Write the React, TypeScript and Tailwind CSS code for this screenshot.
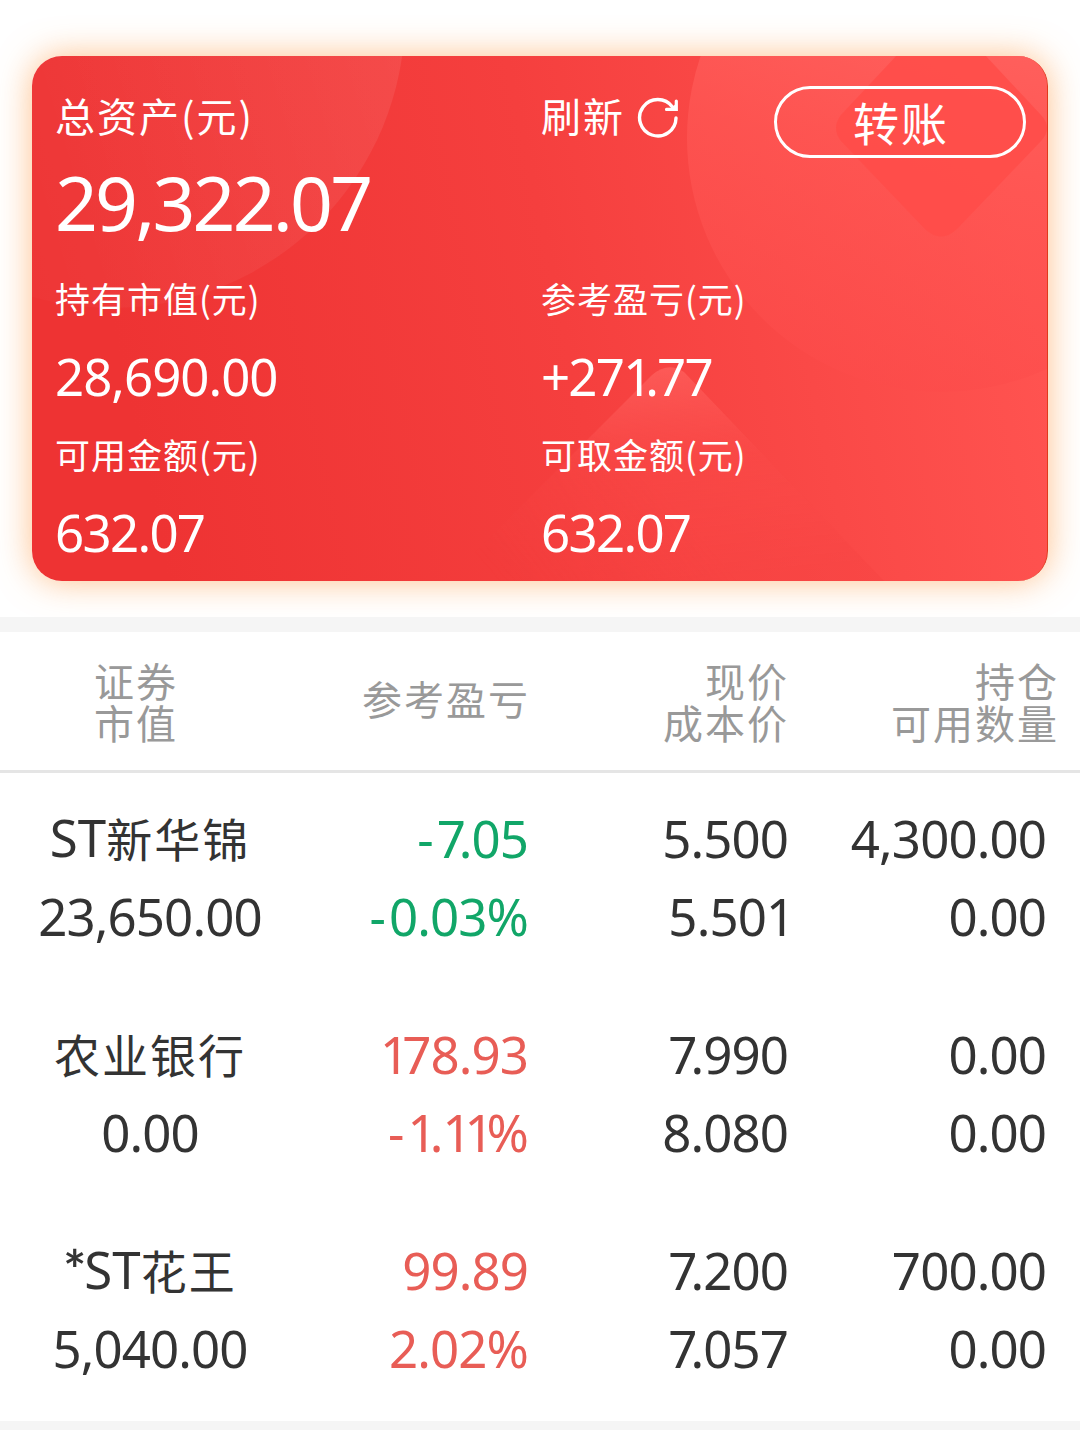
type Holding = {
  name: string;
  value: string;
  profit: string;
  rate: string;
  price: string;
  cost: string;
  amount: string;
  usable: string;
  color: string;
};

const holdings: Holding[] = [
  {
    name: "ST新华锦",
    value: "23,650.00",
    profit: "-7.05",
    rate: "-0.03%",
    price: "5.500",
    cost: "5.501",
    amount: "4,300.00",
    usable: "0.00",
    color: "text-[#11a668]",
  },
  {
    name: "农业银行",
    value: "0.00",
    profit: "178.93",
    rate: "-1.11%",
    price: "7.990",
    cost: "8.080",
    amount: "0.00",
    usable: "0.00",
    color: "text-[#e85d56]",
  },
  {
    name: "*ST花王",
    value: "5,040.00",
    profit: "99.89",
    rate: "2.02%",
    price: "7.200",
    cost: "7.057",
    amount: "700.00",
    usable: "0.00",
    color: "text-[#e85d56]",
  },
];

const stats = [
  { label: "持有市值(元)", value: "28,690.00", tracking: "tracking-[-1px]" },
  { label: "参考盈亏(元)", value: "+271.77", tracking: "tracking-[-1.8px]" },
  { label: "可用金额(元)", value: "632.07", tracking: "tracking-[-1.7px]" },
  { label: "可取金额(元)", value: "632.07", tracking: "tracking-[-1.7px]" },
];

// "1" is narrower than the tabular digit width, "7." is kerned, "-" is wider
function Num({ text }: { text: string }) {
  return (
    <>
      {text.split(/(1|7(?=\.)|-)/).map((part, i) => {
        if (part === "1") {
          return (
            <span key={i} className="tracking-[-0.14em]">
              1
            </span>
          );
        }
        if (part === "7" && i % 2 === 1) {
          return (
            <span key={i} className="tracking-[-0.14em]">
              7
            </span>
          );
        }
        if (part === "-") {
          return (
            <span key={i} className="tracking-[0.06em]">
              -
            </span>
          );
        }
        return part;
      })}
    </>
  );
}

function StockName({ name }: { name: string }) {
  return (
    <>
      {name.split(/(\*|ST)/).map((part, i) => {
        if (part === "*") {
          return (
            <span key={i} className="font-[Lato] text-[54px] leading-none font-bold tracking-[-2px]">
              *
            </span>
          );
        }
        if (part === "ST") {
          return (
            <span key={i} className="font-['Noto_Sans'] text-[51px] leading-none tracking-[0px]">
              ST
            </span>
          );
        }
        return part;
      })}
    </>
  );
}

function RefreshIcon() {
  return (
    <svg width="44" height="44" viewBox="0 0 44 44" fill="none" stroke="#fff" strokeWidth="3.4">
      <path d="M40 23A18.2 18.2 0 1 1 36.5 12" strokeLinecap="round" />
      <path d="M40.3 6V14.4H30.5" strokeWidth="3.2" strokeLinecap="round" />
      <path d="M34 14.5L40.5 8V14.5Z" fill="#fff" stroke="none" />
    </svg>
  );
}

function CardArt() {
  return (
    <svg className="absolute inset-0" width="1016" height="525" viewBox="32 56 1016 525">
      <defs>
        <linearGradient id="left" x1="0" y1="0.75" x2="1" y2="0.45">
          <stop offset="0.2" stopColor="#fff" stopOpacity="0.01" />
          <stop offset="1" stopColor="#fff" stopOpacity="0.08" />
        </linearGradient>
        <linearGradient id="right" x1="0.6" y1="0.1" x2="0.4" y2="1">
          <stop offset="0" stopColor="#ff6b68" stopOpacity="0.85" />
          <stop offset="0.5" stopColor="#ff5855" stopOpacity="0.7" />
          <stop offset="1" stopColor="#fc4b4a" stopOpacity="0.6" />
        </linearGradient>
        <linearGradient id="peak" gradientUnits="userSpaceOnUse" x1="660" y1="365" x2="680" y2="581">
          <stop offset="0" stopColor="#ff6562" stopOpacity="0.7" />
          <stop offset="0.45" stopColor="#fb4c4a" stopOpacity="0.4" />
          <stop offset="1" stopColor="#f74443" stopOpacity="0.5" />
        </linearGradient>
        {/* fades the peak out towards its lower left corner */}
        <linearGradient id="fade" gradientUnits="userSpaceOnUse" x1="480" y1="560" x2="620" y2="440">
          <stop offset="0" stopColor="#000" />
          <stop offset="1" stopColor="#fff" />
        </linearGradient>
        <mask id="peak-mask">
          <rect x="440" y="350" width="460" height="240" fill="url(#fade)" />
        </mask>
      </defs>
      <circle cx="112" cy="15" r="293" fill="url(#left)" />
      <circle cx="941" cy="138" r="254" fill="url(#right)" />
      <path
        d="M841 115L941 8L1041 115Q1053 128 1041 141L957 229Q941 244 925 229L841 141Q831 128 841 115Z"
        fill="#ff4c49"
        fillOpacity="0.85"
      />
      <path d="M446 581L652 375Q668 361 684 372L884 581Z" fill="url(#peak)" mask="url(#peak-mask)" />
    </svg>
  );
}

function AssetCard() {
  return (
    <section className="relative mx-8 h-[525px] overflow-hidden rounded-[30px] border-r border-[#e03a1c] bg-linear-[78deg,#ee3333_12%,#f53f3e_52%,#ff5350_94%] text-white">
      <CardArt />
      <div className="relative px-[23px] pt-[30px]">
        <div className="flex h-[72px]">
          <div className="w-[486px] shrink-0 text-[40px] leading-[58px] tracking-[2px]">总资产(元)</div>
          <div className="flex w-[233px] shrink-0 items-start">
            <span className="text-[40px] leading-[58px] tracking-[2px]">刷新</span>
            <span className="ml-[11px] mt-[9px]">
              <RefreshIcon />
            </span>
          </div>
          <button className="h-[72px] w-[252px] shrink-0 rounded-full border-3 border-white pb-[3px] pl-[2px] text-[46px] leading-none tracking-[2px]">
            转账
          </button>
        </div>
        <div className="h-[108px] font-['Noto_Sans'] text-[75px] leading-[89px] tracking-[-2.8px]">
          <Num text="29,322.07" />
        </div>
        <div className="grid grid-cols-[486px_1fr]">
          {stats.map((s) => (
            <div key={s.label} className="h-[156px]">
              <div className="h-[66px] text-[35px] leading-[64px] tracking-[1px]">{s.label}</div>
              <div className={`h-[90px] font-['Noto_Sans'] text-[51px] leading-[89px] ${s.tracking}`}>
                <Num text={s.value} />
              </div>
            </div>
          ))}
        </div>
      </div>
    </section>
  );
}

function HoldingRow({ item }: { item: Holding }) {
  return (
    <div className="grid h-[216px] grid-cols-[300px_228px_260px_258px] pt-[26px] text-right font-['Noto_Sans'] text-[51px] leading-[78px] tracking-[-0.9px] text-[#333]">
      <div className="text-center">
        <div className="h-[78px] font-['Noto_Sans_CJK_SC',sans-serif] text-[46px] leading-[76px] tracking-[2px]">
          <StockName name={item.name} />
        </div>
        <div>
          <Num text={item.value} />
        </div>
      </div>
      <div className={item.color}>
        <div>
          <Num text={item.profit} />
        </div>
        <div>
          <Num text={item.rate} />
        </div>
      </div>
      <div>
        <div>
          <Num text={item.price} />
        </div>
        <div>
          <Num text={item.cost} />
        </div>
      </div>
      <div>
        <div>
          <Num text={item.amount} />
        </div>
        <div>
          <Num text={item.usable} />
        </div>
      </div>
    </div>
  );
}

export default function App() {
  return (
    <main className="h-[1430px] w-[1080px] overflow-hidden bg-white font-['Noto_Sans_CJK_SC',sans-serif]">
      <div className="h-[617px] overflow-hidden pt-14">
        <div className="relative">
          <div className="absolute inset-x-8 inset-y-0 rounded-[30px] shadow-[0_0_34px_rgba(253,165,90,0.7)]" />
          <AssetCard />
        </div>
      </div>
      <div className="h-[15px] bg-[#f5f5f5]" />

      <div className="grid h-[141px] grid-cols-[272px_258px_259px_270px] items-center border-b-3 border-[#e5e5e5] text-right text-[40px] leading-[42px] tracking-[2px] text-[#999]">
        <div className="text-center">
          证券
          <br />
          市值
        </div>
        <div className="pb-[7px]">参考盈亏</div>
        <div>
          现价
          <br />
          成本价
        </div>
        <div>
          持仓
          <br />
          可用数量
        </div>
      </div>

      {holdings.map((item) => (
        <HoldingRow key={item.name} item={item} />
      ))}
      <div className="h-[9px] bg-[#f5f5f5]" />
    </main>
  );
}
